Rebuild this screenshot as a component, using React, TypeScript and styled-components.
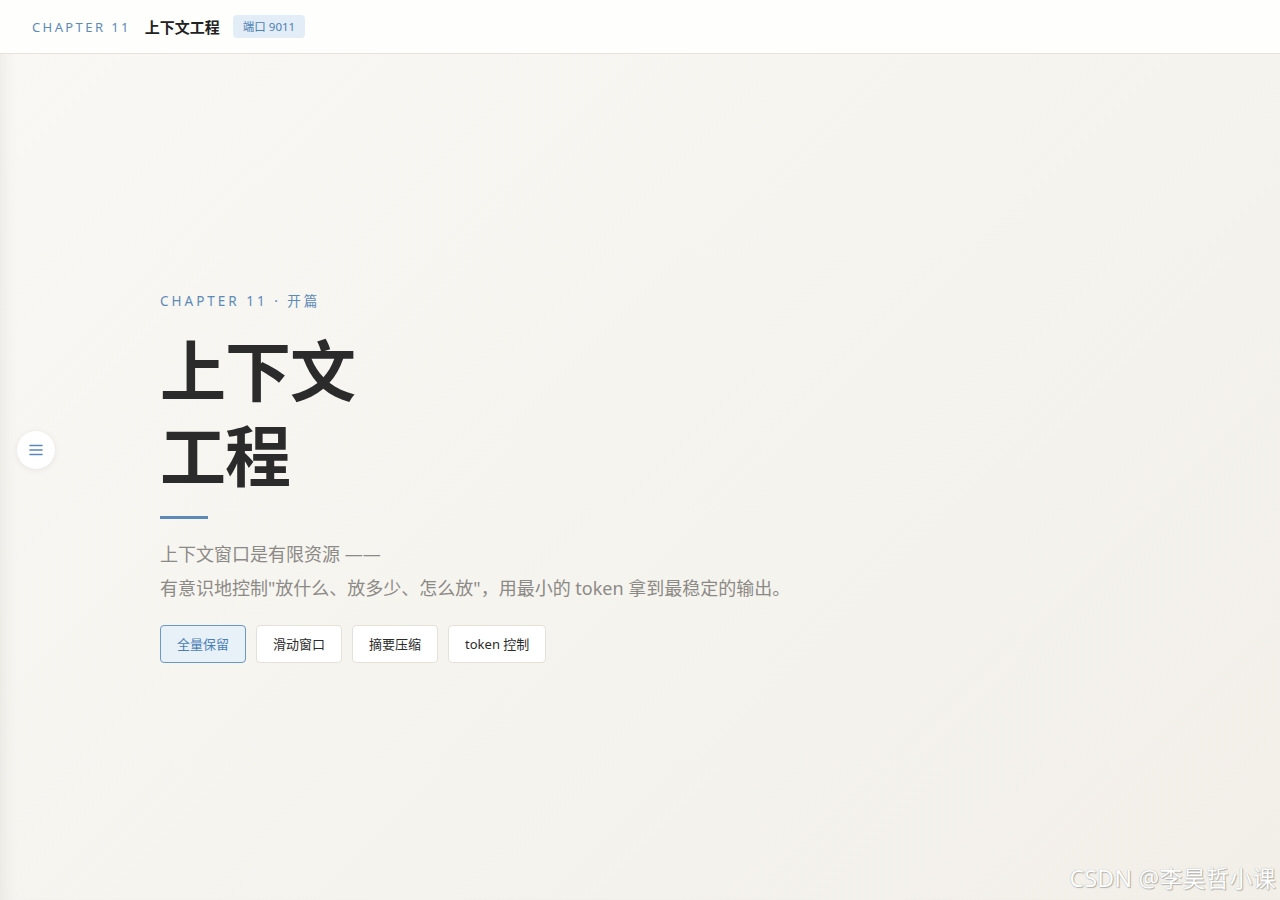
import React, { useState } from "react";
import styled, { createGlobalStyle } from "styled-components";

const GlobalStyle = createGlobalStyle`
  * { box-sizing: border-box; }
  html, body {
    margin: 0;
    padding: 0;
    height: 100%;
  }
  body {
    font-family: "Noto Sans", "Noto Sans CJK SC", sans-serif;
    background: #f5f4ef;
    color: #2b2b2b;
  }
`;

const modes = ["全量保留", "滑动窗口", "摘要压缩", "token 控制"];

export default function App() {
  const [active, setActive] = useState(0);

  return (
    <>
      <GlobalStyle />
      <Page>
        <TopBar>
          <ChapterTag>CHAPTER 11</ChapterTag>
          <TopTitle>上下文工程</TopTitle>
          <PortBadge>端口 9011</PortBadge>
        </TopBar>

        <Stage>
          <MenuButton aria-label="菜单">
            <svg width="16" height="14" viewBox="0 0 16 14">
              <path d="M2 2.5h12M2 7h12M2 11.5h12" stroke="#5a88b8" strokeWidth="1.6" strokeLinecap="round" />
            </svg>
          </MenuButton>

          <Hero>
            <Eyebrow>CHAPTER 11 · 开篇</Eyebrow>
            <HeroTitle>
              上下文
              <br />
              工程
            </HeroTitle>
            <Rule />
            <Lead>
              上下文窗口是有限资源 ——
              <br />
              有意识地控制"放什么、放多少、怎么放"，用最小的 token 拿到最稳定的输出。
            </Lead>
            <ModeRow>
              {modes.map((m, i) => (
                <ModeButton key={m} $active={i === active} onClick={() => setActive(i)}>
                  {m}
                </ModeButton>
              ))}
            </ModeRow>
          </Hero>

          <Watermark>CSDN @李昊哲小课</Watermark>
        </Stage>
      </Page>
    </>
  );
}

const Page = styled.div`
  height: 900px;
  display: flex;
  flex-direction: column;
  background: linear-gradient(135deg, #f9f8f4 0%, #f5f3ee 60%, #f2efe9 100%);
  box-shadow: inset 14px 0 18px -12px rgba(0, 0, 0, 0.07);
  overflow: hidden;
`;

const TopBar = styled.header`
  height: 54px;
  flex-shrink: 0;
  display: flex;
  align-items: center;
  padding: 0 32px;
  background: #fefefd;
  border-bottom: 1px solid #e6e3dc;
`;

const ChapterTag = styled.span`
  font-size: 13px;
  letter-spacing: 2.4px;
  color: #5b8ab8;
  margin-right: 14px;
`;

const TopTitle = styled.span`
  font-size: 15px;
  font-weight: 700;
  color: #222;
  margin-right: 13px;
`;

const PortBadge = styled.span`
  font-size: 11.5px;
  color: #4d80b3;
  background: #e3edf7;
  border-radius: 4px;
  padding: 3px 10px;
  line-height: 17px;
`;

const Stage = styled.main`
  flex: 1;
  position: relative;
  display: flex;
  align-items: center;
  padding: 0 160px 0;
`;

const MenuButton = styled.button`
  position: absolute;
  left: 17px;
  top: 377px;
  width: 38px;
  height: 38px;
  border-radius: 50%;
  border: none;
  background: #ffffff;
  box-shadow: 0 1px 6px rgba(0, 0, 0, 0.08);
  display: flex;
  align-items: center;
  justify-content: center;
  cursor: pointer;
  padding: 0;
`;

const Hero = styled.section`
  display: flex;
  flex-direction: column;
  align-items: flex-start;
  margin-top: -2px;
`;

const Eyebrow = styled.div`
  font-size: 13.5px;
  letter-spacing: 3px;
  color: #5b8ab8;
  margin-bottom: 18px;
`;

const HeroTitle = styled.h1`
  margin: 0;
  font-size: 66px;
  line-height: 85px;
  font-weight: 700;
  color: #2b2b2b;
  letter-spacing: -1px;
`;

const Rule = styled.div`
  width: 48px;
  height: 3px;
  background: #5b8ab8;
  margin: 18px 0 18px;
`;

const Lead = styled.p`
  margin: 0 0 20px;
  font-size: 18px;
  line-height: 34px;
  color: #8c8a86;
`;

const ModeRow = styled.div`
  display: flex;
  gap: 10px;
`;

const ModeButton = styled.button<{ $active: boolean }>`
  height: 38px;
  padding: 0 16px;
  font-family: inherit;
  font-size: 13px;
  border-radius: 4px;
  cursor: pointer;
  border: 1px solid ${(p) => (p.$active ? "#6b98c4" : "#e4e1da")};
  background: ${(p) => (p.$active ? "#e8f0f8" : "#ffffff")};
  color: ${(p) => (p.$active ? "#4a7fb5" : "#2b2b2b")};
`;

const Watermark = styled.div`
  position: absolute;
  right: 4px;
  bottom: 6px;
  font-size: 23px;
  color: #ffffff;
  text-shadow: 0 0 1px #9c9a95, 1px 1px 1px rgba(0, 0, 0, 0.25);
  letter-spacing: 0.3px;
`;
